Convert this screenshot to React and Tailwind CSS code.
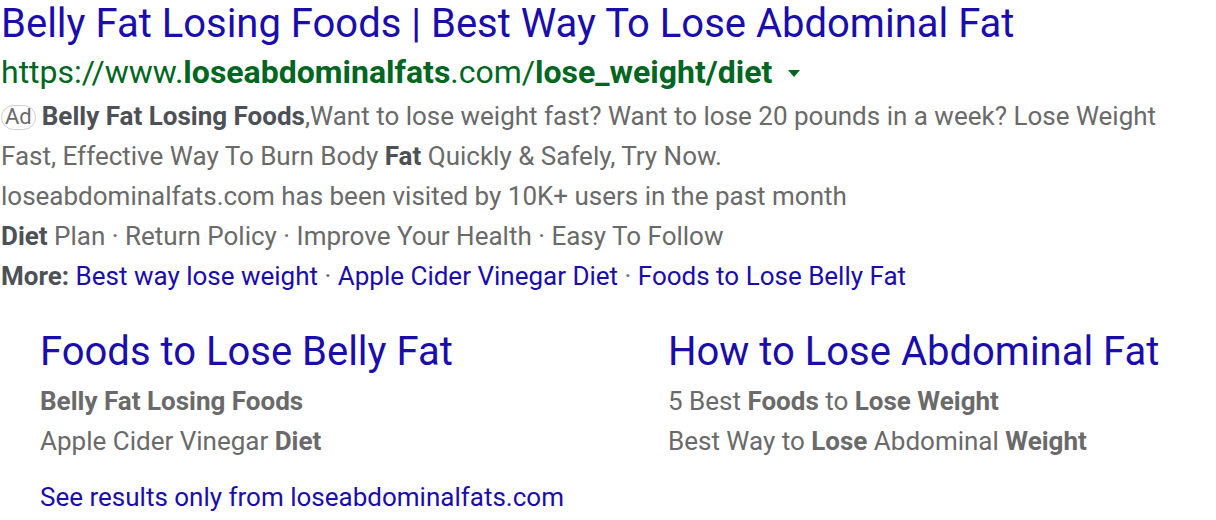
export default function App() {
  const gray = "text-[#6a6a6a]";
  return (
    <div className="w-[1216px] h-[520px] bg-white overflow-hidden" style={{ fontFamily: "Roboto, Arial, sans-serif" }}>
      <div className="pl-[1px]">
        <div className="text-[40px] leading-[48px] text-[#1a0dab] whitespace-nowrap">
          Belly Fat Losing Foods | Best Way To Lose Abdominal Fat
        </div>
        <div className="flex items-center text-[32px] leading-[48px] text-[#006621] whitespace-nowrap">
          <span>
            https://www.<b className="font-bold">loseabdominalfats</b>.com/<b className="font-bold">lose_weight/diet</b>
          </span>
          <span className="ml-[16px] mt-[2px] w-0 h-0 border-l-[6px] border-r-[6px] border-t-[7px] border-l-transparent border-r-transparent border-t-[#006621]"></span>
        </div>
        <div className={`text-[26px] leading-[40px] ${gray}`}>
          <div className="whitespace-nowrap">
            <span className="inline-flex items-center justify-center align-[1px] h-[25px] px-[3px] mr-[6px] rounded-[13px] border border-[#d0d0d0] text-[22px] leading-[22px] text-[#6a6a6a]">Ad</span>
            <b className="font-bold text-[#4d5156]">Belly Fat Losing Foods</b>,Want to lose weight fast? Want to lose 20 pounds in a week? Lose Weight
          </div>
          <div className="whitespace-nowrap">
            Fast, Effective Way To Burn Body <b className="font-bold text-[#4d5156]">Fat</b> Quickly &amp; Safely, Try Now.
          </div>
          <div className="whitespace-nowrap">loseabdominalfats.com has been visited by 10K+ users in the past month</div>
          <div className="whitespace-nowrap">
            <b className="font-bold text-[#4d5156]">Diet</b> Plan · Return Policy · Improve Your Health · Easy To Follow
          </div>
          <div className="whitespace-nowrap">
            <b className="font-bold text-[#4d5156]">More:</b>{" "}
            <span className="text-[#1a0dab]">Best way lose weight</span> · <span className="text-[#1a0dab]">Apple Cider Vinegar Diet</span> · <span className="text-[#1a0dab]">Foods to Lose Belly Fat</span>
          </div>
        </div>
      </div>
      <div className="pl-[40px] mt-[32px]">
        <div className="grid grid-cols-[628px_1fr]">
          <div>
            <div className="text-[40px] leading-[48px] text-[#1a0dab] whitespace-nowrap">Foods to Lose Belly Fat</div>
            <div className={`text-[26px] leading-[40px] ${gray} mt-[5px]`}>
              <div className="whitespace-nowrap font-bold">Belly Fat Losing Foods</div>
              <div className="whitespace-nowrap">Apple Cider Vinegar <b className="font-bold">Diet</b></div>
            </div>
          </div>
          <div>
            <div className="text-[40px] leading-[48px] text-[#1a0dab] whitespace-nowrap">How to Lose Abdominal Fat</div>
            <div className={`text-[26px] leading-[40px] ${gray} mt-[5px]`}>
              <div className="whitespace-nowrap">5 Best <b className="font-bold">Foods</b> to <b className="font-bold">Lose Weight</b></div>
              <div className="whitespace-nowrap">Best Way to <b className="font-bold">Lose</b> Abdominal <b className="font-bold">Weight</b></div>
            </div>
          </div>
        </div>
        <div className="mt-[16px] text-[26px] leading-[40px] text-[#1a0dab] whitespace-nowrap">See results only from loseabdominalfats.com</div>
      </div>
    </div>
  );
}
